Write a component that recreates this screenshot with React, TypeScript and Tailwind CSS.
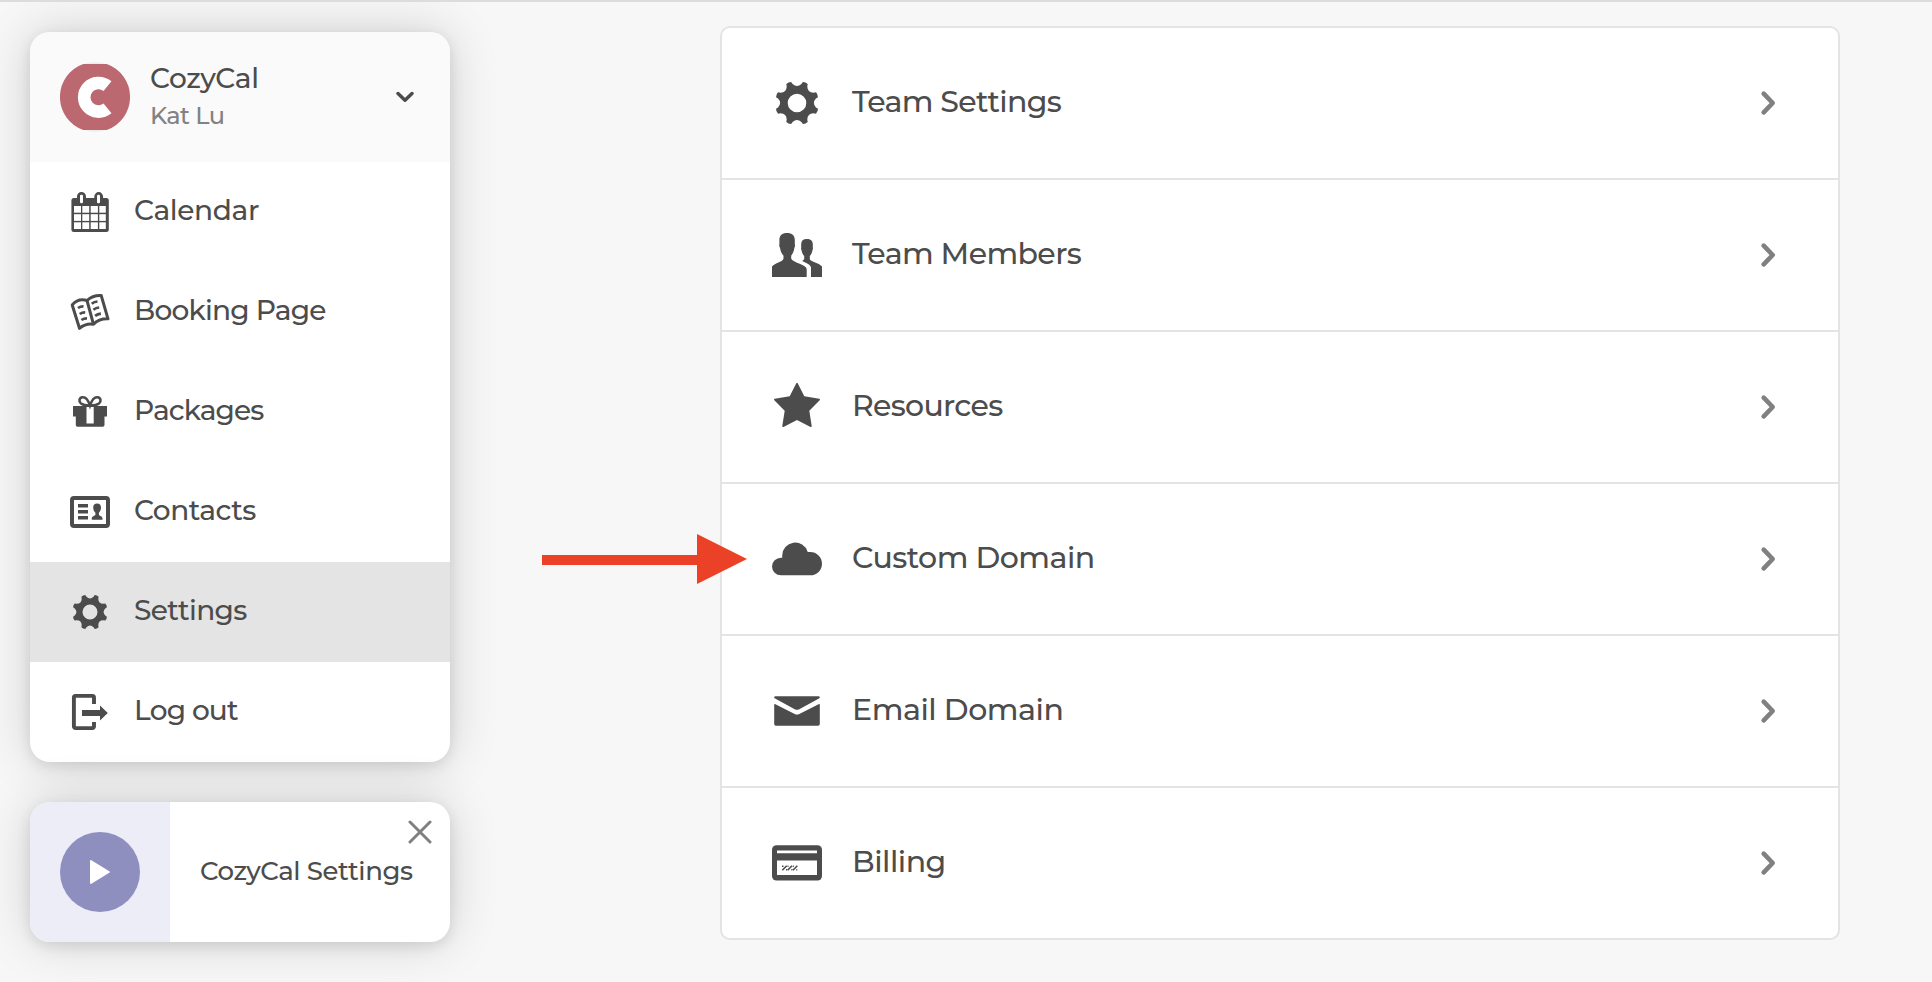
import React, { useState } from "react";

interface IconProps {
  className?: string;
}

// eight rounded teeth with curved notches between them
function gearPath(c: number, r: number, hole: number) {
  const at = (radius: number, a: number) =>
    `${(c + radius * Math.cos(a)).toFixed(2)} ${(c + radius * Math.sin(a)).toFixed(2)}`;
  const step = Math.PI / 4;
  let d = "";
  for (let i = 0; i < 8; i++) {
    const a = step * i + step / 2;
    d += `${i === 0 ? "M" : "L"}${at(r * 0.985, a - 0.12)}`;
    d += `Q${at(r * 1.03, a)} ${at(r * 0.985, a + 0.12)}`;
    d += `L${at(r * 0.88, a + 0.165)}`;
    d += `Q${at(r * 0.67, a + step / 2)} ${at(r * 0.88, a + step - 0.165)}`;
  }
  d += `ZM${c - hole} ${c}a${hole} ${hole} 0 1 0 ${hole * 2} 0a${hole} ${hole} 0 1 0 ${-hole * 2} 0Z`;
  return d;
}

const CalendarIcon = ({ className }: IconProps) => (
  <svg viewBox="0 0 40 40" className={className} fill="currentColor">
    <rect x="1.4" y="6" width="37.4" height="34" rx="2.5" />
    <path d="M7 9V4.500a4.500 4.500 0 0 1 9 0V9zM24.300 9V4.500a4.400 4.400 0 0 1 8.800 0V9z" />
    <g fill="#fff">
      <rect x="10" y="2.700" width="3" height="8.500" rx="1.200" />
      <rect x="27" y="2.700" width="3" height="8.500" rx="1.200" />
      {[14, 22.2, 30.3].map((y) => (
        <React.Fragment key={y}>
          <rect x="4" y={y} width="7" height="6.700" />
          <rect x="12.300" y={y} width="6.900" height="6.700" />
          <rect x="20.700" y={y} width="7.200" height="6.700" />
          <rect x="29.300" y={y} width="6.500" height="6.700" />
        </React.Fragment>
      ))}
    </g>
  </svg>
);

const BookIcon = ({ className }: IconProps) => (
  <svg
    viewBox="0 0 40 40"
    className={className}
    fill="none"
    stroke="currentColor"
    strokeWidth="3"
    strokeLinejoin="round"
  >
    <path d="M2.200 13Q8 6 17 8.500Q23 3 31.200 3.500L38 26.800Q29 26.500 23.500 32.300Q16 31 9.500 36.300Z" />
    <path d="M17 8.500L23.500 32.300" />
    <path
      d="M8 16Q10.500 14.200 13.500 14.300M9.700 22Q12.300 20.200 15.200 20.300M11.400 28Q14 26.200 17 26.300M21.700 11.700Q24.200 9.700 27.500 9.500M23.400 17.800Q26 15.700 29.200 15.500M25.100 23.900Q27.700 21.900 30.900 21.600"
      strokeWidth="2.700"
    />
  </svg>
);

const GiftIcon = ({ className }: IconProps) => (
  <svg viewBox="0 0 40 40" className={className} fill="currentColor">
    <path d="M3 14h34v10.500h-2.500V33a1.700 1.700 0 0 1-1.700 1.700H7.500A1.700 1.700 0 0 1 5.800 33v-8.500H3z" />
    <path d="M16.500 15h7.200v16.500h-7.200z" fill="#fff" />
    <path
      d="M20 13.500C18 7.500 15.500 4.900 12.600 5.200C9 5.600 8.500 9.500 11 11.500C13 13 16 13.600 20 13.500C24 13.600 27 13 29 11.500C31.500 9.500 31 5.600 27.400 5.200C24.500 4.900 22 7.500 20 13.500Z"
      fill="none"
      stroke="currentColor"
      strokeWidth="2.600"
    />
  </svg>
);

const ContactsIcon = ({ className }: IconProps) => (
  <svg viewBox="0 0 40 40" className={className} fill="currentColor">
    <rect x="2" y="6" width="36" height="28" rx="2" fill="none" stroke="currentColor" strokeWidth="4" />
    <path d="M8 12h10v3.400H8zM8 18h10v3.400H8zM8 24h10v3.600H8z" />
    <path d="M27.100 11.600c2.500 0 3.900 1.500 3.900 3.900c0 2-.8 4-2.100 5.300v1.900c.4 1.300 3.600 1.300 3.600 3.700v1.300H21.800v-1.300c0-2.400 3.200-2.400 3.600-3.700v-1.900c-1.300-1.300-2.200-3.300-2.200-5.300c0-2.400 1.400-3.900 3.900-3.900z" />
  </svg>
);

const SmallGearIcon = ({ className }: IconProps) => (
  <svg viewBox="0 0 40 40" className={className} fill="currentColor" fillRule="evenodd">
    <path d={gearPath(20, 17.8, 7.5)} />
  </svg>
);

const LogoutIcon = ({ className }: IconProps) => (
  <svg viewBox="0 0 40 40" className={className} fill="currentColor">
    <path
      d="M24 12V5.500a1.600 1.600 0 0 0-1.600-1.600H5.500a1.600 1.600 0 0 0-1.600 1.600v29a1.600 1.600 0 0 0 1.600 1.600h16.900a1.600 1.600 0 0 0 1.600-1.600V30"
      fill="none"
      stroke="currentColor"
      strokeWidth="3.900"
    />
    <path d="M12 18h18v-4.600L37.800 21L30 28.600V24H12z" />
  </svg>
);

const GearIcon = ({ className }: IconProps) => (
  <svg viewBox="0 0 50 50" className={className} fill="currentColor" fillRule="evenodd">
    <path d={gearPath(25, 22.1, 9.3)} />
  </svg>
);

const MembersIcon = ({ className }: IconProps) => (
  <svg viewBox="0 0 50 50" className={className} fill="currentColor">
    <path d="M15 3c5 0 7.800 2.300 7.800 7v4.500c.5.500.4 2-.4 3.200c-.5 3.600-1.600 5.800-3.200 8v3.100c2 3.700 10.300 4.700 14.300 8.200c.9.800 1.200 1.700 1.200 3v7H0v-10.500c3.200-3.800 10-4.200 11.500-7.700v-3.100c-1.900-2.200-3-4.400-3.500-8c-.8-1.200-1-2.700-.6-3.200V10c0-4.700 2.600-7 7.600-7z" />
    <path d="M34.800 9c3.700 0 6 1.800 6 5.300v3.300c.3.600.2 1.600-.3 2.500c-.4 2.600-1.200 4.400-2.700 6v3.200c1.500 2.800 8.700 3.400 12.200 7.200v10.500H39v-9.500c0-2.700-4.800-4.300-8.800-6.500c1-.8 1.700-1.300 2-2v-2.900c-1.500-1.600-2.300-3.400-2.700-6c-.5-.9-.6-1.900-.3-2.500v-3.300c0-3.500 1.900-5.300 5.600-5.300z" />
  </svg>
);

const StarIcon = ({ className }: IconProps) => (
  <svg viewBox="0 0 50 50" className={className} fill="currentColor">
    <path d="M24.300 1.300Q25 0 25.700 1.300L32.300 14.300L47.300 16.800Q48.600 17.100 47.700 18.200L37.300 28.700L39.700 44Q39.700 45.500 38.500 44.900L25 38L11.500 44.900Q10.300 45.500 10.300 44L12.700 28.700L2.300 18.200Q1.400 17.100 2.700 16.800L17.700 14.300Z" />
  </svg>
);

const CloudIcon = ({ className }: IconProps) => (
  <svg viewBox="0 0 50 50" className={className} fill="currentColor">
    <path d="M9 41.300A9 8.800 0 0 1 9 23.700L10.200 23.800V21.500A13 13 0 0 1 35.600 17.700Q36 18.300 38.300 18A11.700 11.650 0 0 1 38.300 41.300Z" />
  </svg>
);

const MailIcon = ({ className }: IconProps) => (
  <svg viewBox="0 0 50 50" className={className} fill="currentColor">
    <path d="M3.600 10.200h42.800c1.800 0 1.900 1.600.5 2.400L27.300 23.200q-2.300 1.200-4.600 0L3.100 12.600c-1.400-.8-1.300-2.400.5-2.400z" />
    <path d="M2.200 18.800c0-.9.500-1 1.200-.6L22.700 27.900q2.300 1.200 4.600 0L46.600 18.200c.7-.4 1.200-.3 1.200.6V38a1.800 1.800 0 0 1-1.800 1.800H4A1.800 1.800 0 0 1 2.200 38z" />
  </svg>
);

const CardIcon = ({ className }: IconProps) => (
  <svg viewBox="0 0 50 50" className={className} fill="currentColor">
    <rect y="7.200" width="50" height="35.400" rx="4.500" />
    <path d="M5 12.400h40v2.900H5zM5 22.500h40V37H5z" fill="#fff" />
    <path
      d="M10.300 32.200l4.400-4.400M15.600 32.200l4.400-4.400M20.900 32.200l4.400-4.400M10 28.200h1.500M15.500 28.200h1M20.800 28.200h1M14 31.800h1M19.300 31.800h1M24.300 31.800h1"
      stroke="currentColor"
      strokeWidth="1.600"
    />
  </svg>
);

const menu = [
  { label: "Calendar", icon: CalendarIcon, tracking: "tracking-[-0.35px]" },
  { label: "Booking Page", icon: BookIcon, tracking: "tracking-[-0.75px]" },
  { label: "Packages", icon: GiftIcon, tracking: "tracking-[-0.9px]" },
  { label: "Contacts", icon: ContactsIcon, tracking: "tracking-[-0.5px]" },
  { label: "Settings", icon: SmallGearIcon, tracking: "tracking-[-0.6px]" },
  { label: "Log out", icon: LogoutIcon, tracking: "tracking-[-0.8px]" },
];

const options = [
  { label: "Team Settings", icon: GearIcon, tracking: "tracking-[-0.65px]" },
  { label: "Team Members", icon: MembersIcon, tracking: "tracking-[-0.6px]" },
  { label: "Resources", icon: StarIcon, tracking: "tracking-[-0.7px]" },
  { label: "Custom Domain", icon: CloudIcon, tracking: "tracking-[-0.5px]" },
  { label: "Email Domain", icon: MailIcon, tracking: "tracking-[-0.45px]" },
  { label: "Billing", icon: CardIcon, tracking: "tracking-[-0.5px]" },
];

const Account = () => (
  <div className="flex h-[130px] items-center bg-[#fafafa] pl-[30px] pr-9">
    <svg viewBox="0 0 70 70" className="size-[70px] shrink-0">
      <circle cx="35" cy="35" r="35" fill="#ededed" />
      <path d="M23.300 2H46.700A35 35 0 0 1 46.700 68H23.300A35 35 0 0 1 23.300 2Z" fill="#bb6871" />
      <path d="M47.500 24.200A14.300 14.300 0 1 0 47.500 46.400" fill="none" stroke="#fff" strokeWidth="12.600" />
    </svg>
    <div className="ml-5 flex flex-1 flex-col">
      <span className="text-[28px] leading-[37px] tracking-[-0.3px]">CozyCal</span>
      <span className="text-[24px] leading-[37px] tracking-[-0.6px] text-[#828282]">Kat Lu</span>
    </div>
    <svg viewBox="0 0 18 12" className="h-3 w-[18px]" fill="none" stroke="currentColor">
      <path d="M2 2.500L9 9.300L16 2.500" strokeWidth="3.400" strokeLinecap="round" strokeLinejoin="round" />
    </svg>
  </div>
);

const Sidebar = () => {
  const [active, setActive] = useState("Settings");

  return (
    <nav className="overflow-hidden rounded-[20px] bg-white shadow-[0_4px_14px_rgba(0,0,0,0.1),0_0_50px_rgba(0,0,0,0.16)]">
      <Account />
      {menu.map(({ label, icon: Icon, tracking }) => (
        <button
          key={label}
          onClick={() => setActive(label)}
          className={`flex h-[100px] w-full cursor-pointer items-center gap-6 pl-10 ${
            active === label ? "bg-[#e4e4e4]" : ""
          }`}
        >
          <Icon className="size-10 shrink-0" />
          <span className={`pb-1 text-[28px] ${tracking}`}>{label}</span>
        </button>
      ))}
    </nav>
  );
};

const VideoCard = () => (
  <div className="flex h-[140px] overflow-hidden rounded-[20px] bg-white shadow-[0_4px_14px_rgba(0,0,0,0.1),0_0_50px_rgba(0,0,0,0.16)]">
    <div className="flex w-[140px] items-center justify-center bg-[#ecedf7]">
      <div className="flex size-20 items-center justify-center rounded-full bg-[#8e8ebf]">
        <svg viewBox="0 0 20 24" className="h-6 w-5" fill="#fff">
          <path d="M0 1.500Q0-.6 1.800.4L19.300 11.200Q20.500 12 19.300 12.800L1.800 23.600Q0 24.600 0 22.500Z" />
        </svg>
      </div>
    </div>
    <div className="relative flex flex-1 items-center pl-[30px]">
      <span className="pb-0.5 text-[26px] tracking-[-0.4px]">CozyCal Settings</span>
      <button className="absolute right-[18px] top-[18px] cursor-pointer text-[#808080]">
        <svg viewBox="0 0 24 24" className="size-6" fill="none" stroke="currentColor">
          <path d="M2 2L22 22M22 2L2 22" strokeWidth="3" strokeLinecap="round" />
        </svg>
      </button>
    </div>
  </div>
);

const SettingsList = () => (
  <div className="ml-[270px] mt-6 h-[914px] w-[1120px] divide-y-2 divide-[#e4e4e4] rounded-[10px] border-2 border-[#e4e4e4] bg-white">
    {options.map(({ label, icon: Icon, tracking }) => (
      <a key={label} className="flex h-[152px] cursor-pointer items-center pl-[50px] pr-[62px] last:h-[150px]">
        <Icon className="size-[50px] shrink-0" />
        <span className={`ml-[30px] flex-1 pb-1 text-[30px] ${tracking}`}>{label}</span>
        <svg viewBox="0 0 16 26" className="h-[26px] w-4 text-[#808080]" fill="none" stroke="currentColor">
          <path d="M3.700 3.700L12.700 13L3.700 22.300" strokeWidth="4.600" strokeLinecap="round" strokeLinejoin="round" />
        </svg>
      </a>
    ))}
  </div>
);

export default function App() {
  return (
    <div className="relative flex h-[982px] w-[1932px] overflow-hidden border-t-2 border-[#dcdcdc] bg-[#f7f7f7] font-['Montserrat','Inter',sans-serif] font-medium text-[#4c4c4c]">
      <aside className="ml-[30px] mt-[30px] flex w-[420px] flex-col gap-10">
        <Sidebar />
        <VideoCard />
      </aside>
      <SettingsList />
      <svg viewBox="0 0 206 50" className="absolute left-[542px] top-[532px] h-[50px] w-[206px]" fill="#eb4127">
        <path d="M0 21h155V0l50 25l-50 25V31H0z" />
      </svg>
    </div>
  );
}
